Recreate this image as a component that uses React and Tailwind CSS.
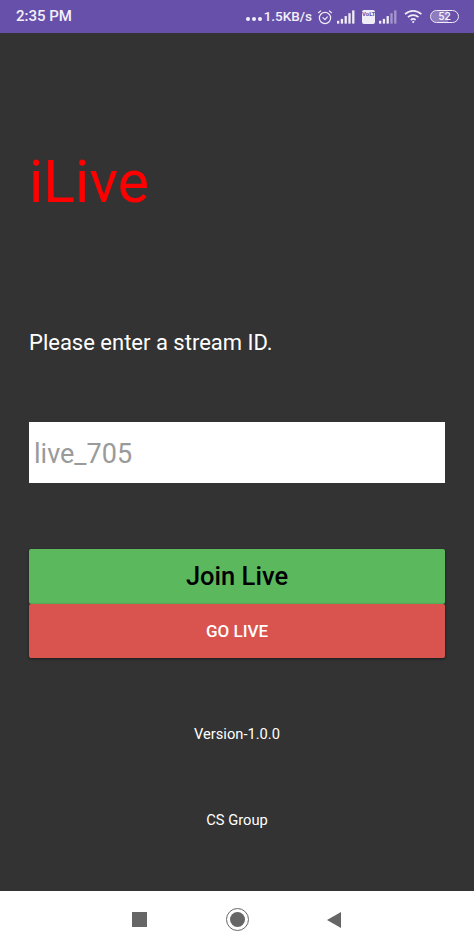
const SIGNAL_BARS = [3, 5, 8, 11, 14]

function Signal({ faded }) {
  return (
    <svg width="18" height="14" viewBox="0 0 19 14">
      {SIGNAL_BARS.map((h, i) => (
        <rect key={i} x={i * 4} y={14 - h} width="2.4" height={h} fill="#f1edf8" opacity={faded && i > 2 ? 0.45 : 1} />
      ))}
    </svg>
  )
}

function StatusBar() {
  return (
    <div className="h-[33px] shrink-0 bg-[#6750a9] flex items-center justify-between pl-[16px] pr-[15px] text-[#f3f0fa] text-[15px] font-medium">
      <span>2:35 PM</span>
      <div className="flex items-center">
        <span className="flex gap-[2px] mt-[4px]">
          <span className="w-[4px] h-[4px] rounded-full bg-[#f3f0fa]" />
          <span className="w-[4px] h-[4px] rounded-full bg-[#f3f0fa]" />
          <span className="w-[4px] h-[4px] rounded-full bg-[#f3f0fa]" />
        </span>
        <span className="ml-[2px] text-[13.5px]">1.5KB/s</span>
        {/* alarm */}
        <svg className="ml-[5px]" width="16" height="16" viewBox="0 0 16 16" fill="none" stroke="#f1edf8" strokeWidth="1.2">
          <circle cx="8" cy="9" r="5.6" />
          <path d="M5.6 8.4 L8 10.6 L10.6 7.6" />
          <path d="M1.2 4 L4 1.6 M14.8 4 L12 1.6" />
        </svg>
        <span className="ml-[4px] flex"><Signal /></span>
        {/* volte */}
        <span className="ml-[7px] w-[13px] h-[14px] rounded-[2px] bg-[#f1edf8] text-[#6750a9] text-[6px] leading-[7px] font-bold text-center">VoLTE</span>
        <span className="ml-[4px] flex"><Signal faded /></span>
        {/* wifi */}
        <svg className="ml-[7px]" width="19" height="15" viewBox="0 0 19 15" fill="none" stroke="#f1edf8" strokeWidth="1.7">
          <path d="M1 5.2 C5.8 0.8 12.4 0.8 17.4 5.2" />
          <path d="M3.9 8.2 C7 5.4 11.4 5.4 14.5 8.2" />
          <path d="M6.8 11 C8.2 9.8 10.2 9.8 11.6 11" />
          <circle cx="9.2" cy="13" r="1.1" fill="#f1edf8" stroke="none" />
        </svg>
        {/* battery */}
        <div className="relative ml-[7px] w-[29px] h-[13px] rounded-full border border-[#f1edf8] overflow-hidden flex items-center justify-center text-[11px] leading-none">
          <div className="absolute inset-y-0 left-0 w-[62%] bg-white/25" />
          <span className="relative">52</span>
        </div>
      </div>
    </div>
  )
}

function NavBar() {
  return (
    <div className="h-[57px] shrink-0 bg-white flex items-center justify-center">
      <div className="w-[15px] h-[15px] bg-[#666666]" />
      <div className="ml-[79px] w-[23px] h-[23px] rounded-full border-[1.5px] border-[#666666] flex items-center justify-center">
        <div className="w-[15px] h-[15px] rounded-full bg-[#666666]" />
      </div>
      <svg className="ml-[78px]" width="15" height="16" viewBox="0 0 15 16">
        <path d="M0 8 L14 0 V16 Z" fill="#666666" />
      </svg>
    </div>
  )
}

export default function App() {
  return (
    <div className="w-[474px] h-[948px] flex flex-col bg-[#333333] font-['Roboto',sans-serif]">
      <StatusBar />
      <div className="flex-1 flex flex-col px-[29px]">
        <h1 className="mt-[115px] text-[59px] leading-[67px] text-[#ff0000] font-normal">iLive</h1>
        <p className="mt-[115px] text-[22px] leading-[26px] text-white">Please enter a stream ID.</p>
        <div className="mt-[66px] h-[61px] bg-white flex items-center px-[5px] pt-[3px] text-[27px] text-[#9a9a9a]">live_705</div>
        <button className="mt-[66px] h-[55px] rounded-[2px] bg-[#5cb85c] text-black text-[25.5px] font-medium pb-[1px] shadow-[0_1px_3px_rgba(0,0,0,0.4)]">Join Live</button>
        <button className="h-[54px] rounded-[2px] bg-[#d9534f] text-white text-[17px] font-medium pt-[2px] shadow-[0_1px_3px_rgba(0,0,0,0.5)]">GO LIVE</button>
        <p className="mt-[68px] text-center text-[14.7px] leading-[17px] text-white">Version-1.0.0</p>
        <p className="mt-[69px] text-center text-[14.7px] leading-[17px] text-white">CS Group</p>
      </div>
      <NavBar />
    </div>
  )
}
